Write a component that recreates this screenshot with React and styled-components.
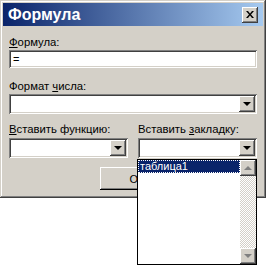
import React from 'react';
import styled, { createGlobalStyle } from 'styled-components';

const GlobalStyle = createGlobalStyle`
  body {
    margin: 0;
    background: #ffffff;
    font-family: "Liberation Sans", Arial, sans-serif;
  }
`;

const raised = `
  box-shadow: inset -1px -1px #404040, inset 1px 1px #ffffff,
    inset -2px -2px #808080, inset 2px 2px #d4d0c8;
`;

const sunken = `
  box-shadow: inset 1px 1px #808080, inset -1px -1px #ffffff,
    inset 2px 2px #404040, inset -2px -2px #d4d0c8;
`;

const Page = styled.div`
  min-height: 100vh;
  position: relative;
`;

const Window = styled.div`
  position: relative;
  box-sizing: border-box;
  width: 266px;
  height: 198px;
  padding: 3px;
  background: #d4d0c8;
  box-shadow: inset -1px -1px #404040, inset 1px 1px #d4d0c8,
    inset -2px -2px #808080, inset 2px 2px #ffffff;
  display: flex;
  flex-direction: column;
`;

const TitleBar = styled.div`
  height: 23px;
  display: flex;
  align-items: center;
  justify-content: space-between;
  padding: 0 5px 0 5px;
  background: linear-gradient(to right, #0a246a, #a6caf0);
`;

const TitleText = styled.span`
  color: #ffffff;
  font-size: 16px;
  font-weight: bold;
`;

const CloseButton = styled.div`
  width: 16px;
  height: 16px;
  background: #d4d0c8;
  ${raised}
  display: flex;
  align-items: center;
  justify-content: center;
`;

const Content = styled.div`
  display: flex;
  flex-direction: column;
  padding: 10px 6px 0;
`;

const Label = styled.div`
  font-size: 11.3px;
  line-height: 13px;
  color: #000000;
  margin-top: ${(p) => p.$top || 0}px;
  margin-bottom: ${(p) => p.$bottom || 0}px;
  white-space: nowrap;
`;

const Key = styled.span`
  text-decoration: underline;
`;

const Field = styled.div`
  box-sizing: border-box;
  height: ${(p) => p.$h || 19}px;
  background: #ffffff;
  ${sunken}
  display: flex;
  align-items: center;
  justify-content: space-between;
  padding: 2px;
  font-size: 11px;
`;

const FieldText = styled.span`
  padding-left: 2px;
`;

const DropButton = styled.div`
  width: 16px;
  height: 100%;
  background: #d4d0c8;
  ${raised}
  display: flex;
  align-items: center;
  justify-content: center;
`;

const Arrow = styled.div`
  width: 0;
  height: 0;
  border-left: 4px solid transparent;
  border-right: 4px solid transparent;
  border-${(p) => (p.$up ? 'bottom' : 'top')}: 4px solid ${(p) => p.$color || '#000'};
`;

const Columns = styled.div`
  display: grid;
  grid-template-columns: 119px 119px;
  justify-content: space-between;
  margin-top: 9px;
`;

const Column = styled.div`
  display: flex;
  flex-direction: column;
`;

const ButtonRow = styled.div`
  padding-left: 91px;
  margin-top: 9px;
`;

const PushButton = styled.div`
  box-sizing: border-box;
  width: 75px;
  height: 23px;
  background: #d4d0c8;
  box-shadow: inset -1px -1px #000000, inset 1px 1px #ffffff,
    inset -2px -2px #808080;
  display: flex;
  align-items: center;
  justify-content: center;
  font-size: 11px;
`;

const DropList = styled.div`
  position: absolute;
  left: 137px;
  top: 159px;
  box-sizing: border-box;
  width: 120px;
  height: 106px;
  border: 1px solid #000000;
  background: #ffffff;
  display: flex;
  z-index: 2;
`;

const Items = styled.div`
  flex: 1;
`;

const Item = styled.div`
  height: 13px;
  line-height: 13px;
  font-size: 11px;
  padding-left: 2px;
  color: ${(p) => (p.$selected ? '#ffffff' : '#000000')};
  background: ${(p) => (p.$selected ? '#0a246a' : 'transparent')};
  outline: ${(p) => (p.$selected ? '1px dotted #ffffff' : 'none')};
  outline-offset: -1px;
`;

const ScrollBar = styled.div`
  width: 16px;
  display: flex;
  flex-direction: column;
  justify-content: space-between;
  background: repeating-conic-gradient(#d4d0c8 0 25%, #ffffff 0 50%) 0 0 / 2px 2px;
`;

const ScrollButton = styled.div`
  height: 16px;
  background: #d4d0c8;
  ${raised}
  display: flex;
  align-items: center;
  justify-content: center;
`;

function Combo({ height }) {
  return (
    <Field $h={height}>
      <span />
      <DropButton>
        <Arrow />
      </DropButton>
    </Field>
  );
}

export default function App() {
  return (
    <Page>
      <GlobalStyle />
      <Window>
        <TitleBar>
          <TitleText>Формула</TitleText>
          <CloseButton>
            <svg width="8" height="7" viewBox="0 0 8 7">
              <path d="M0 0h2l2 2.5L6 0h2L5 3.5 8 7H6L4 4.5 2 7H0l3-3.5z" fill="#000" />
            </svg>
          </CloseButton>
        </TitleBar>
        <Content>
          <Label $bottom={1}>
            <Key>Ф</Key>ормула:
          </Label>
          <Field $h={18}>
            <FieldText>=</FieldText>
          </Field>
          <Label $top={12} $bottom={1}>
            Формат <Key>ч</Key>исла:
          </Label>
          <Combo height={20} />
          <Columns>
            <Column>
              <Label $bottom={2}>
                <Key>В</Key>ставить функцию:
              </Label>
              <Combo height={20} />
            </Column>
            <Column>
              <Label $bottom={2}>
                Вставить <Key>з</Key>акладку:
              </Label>
              <Combo height={20} />
            </Column>
          </Columns>
          <ButtonRow>
            <PushButton>OK</PushButton>
          </ButtonRow>
        </Content>
      </Window>
      <DropList>
        <Items>
          <Item $selected>таблица1</Item>
        </Items>
        <ScrollBar>
          <ScrollButton>
            <Arrow $up $color="#808080" />
          </ScrollButton>
          <ScrollButton>
            <Arrow $color="#808080" />
          </ScrollButton>
        </ScrollBar>
      </DropList>
    </Page>
  );
}
